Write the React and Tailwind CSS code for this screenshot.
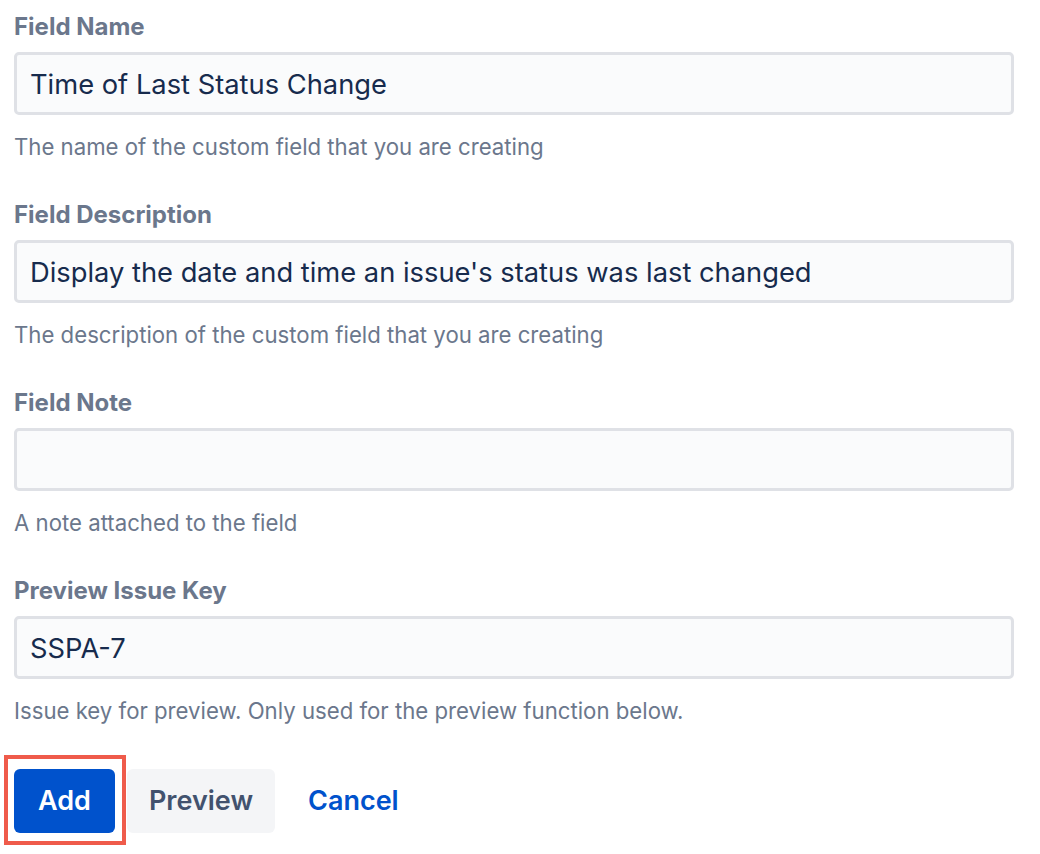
import React from "react";

const fields = [
  { label: "Field Name", value: "Time of Last Status Change", help: "The name of the custom field that you are creating" },
  { label: "Field Description", value: "Display the date and time an issue's status was last changed", help: "The description of the custom field that you are creating" },
  { label: "Field Note", value: "", help: "A note attached to the field" },
  { label: "Preview Issue Key", value: "SSPA-7", help: "Issue key for preview. Only used for the preview function below." },
];

export default function App() {
  return (
    <div
      className="w-[1040px] h-[854px] bg-white overflow-hidden"
      style={{ fontFamily: "Inter, 'Noto Sans', 'Liberation Sans', sans-serif" }}
    >
      <div className="pl-[14px] pt-[11px] w-[1014px] flex flex-col">
        {fields.map((f, i) => (
          <div key={i} className={i === 0 ? "" : "mt-[38px]"}>
            <div className="h-[32px] leading-[32px] text-[24px] font-bold text-[#6b778c]">{f.label}</div>
            <div className="mt-[9px] h-[63px] rounded-[5px] border-[3px] border-[#dfe1e6] bg-[#fafbfc] flex items-center px-[13px] pt-[4px] text-[27.3px] text-[#172b4d]">
              {f.value}
            </div>
            <div className="mt-[18px] h-[28px] leading-[28px] text-[22.2px] text-[#6b778c]">{f.help}</div>
          </div>
        ))}
        <div className="relative mt-[44px] flex items-center">
          <div className="absolute left-[-10px] top-[-14px] w-[122px] h-[90px] border-[4px] border-[#ef5b4b] pointer-events-none" />
          <button className="w-[101px] h-[64px] rounded-[6px] bg-[#0052cc] text-white text-[27px] font-semibold">Add</button>
          <button className="ml-[12px] w-[148px] h-[64px] rounded-[6px] bg-[#f4f5f7] text-[#42526e] text-[27px] font-semibold">Preview</button>
          <button className="ml-[12px] px-[21px] h-[64px] rounded-[6px] text-[#0052cc] text-[27px] font-semibold">Cancel</button>
        </div>
      </div>
    </div>
  );
}
